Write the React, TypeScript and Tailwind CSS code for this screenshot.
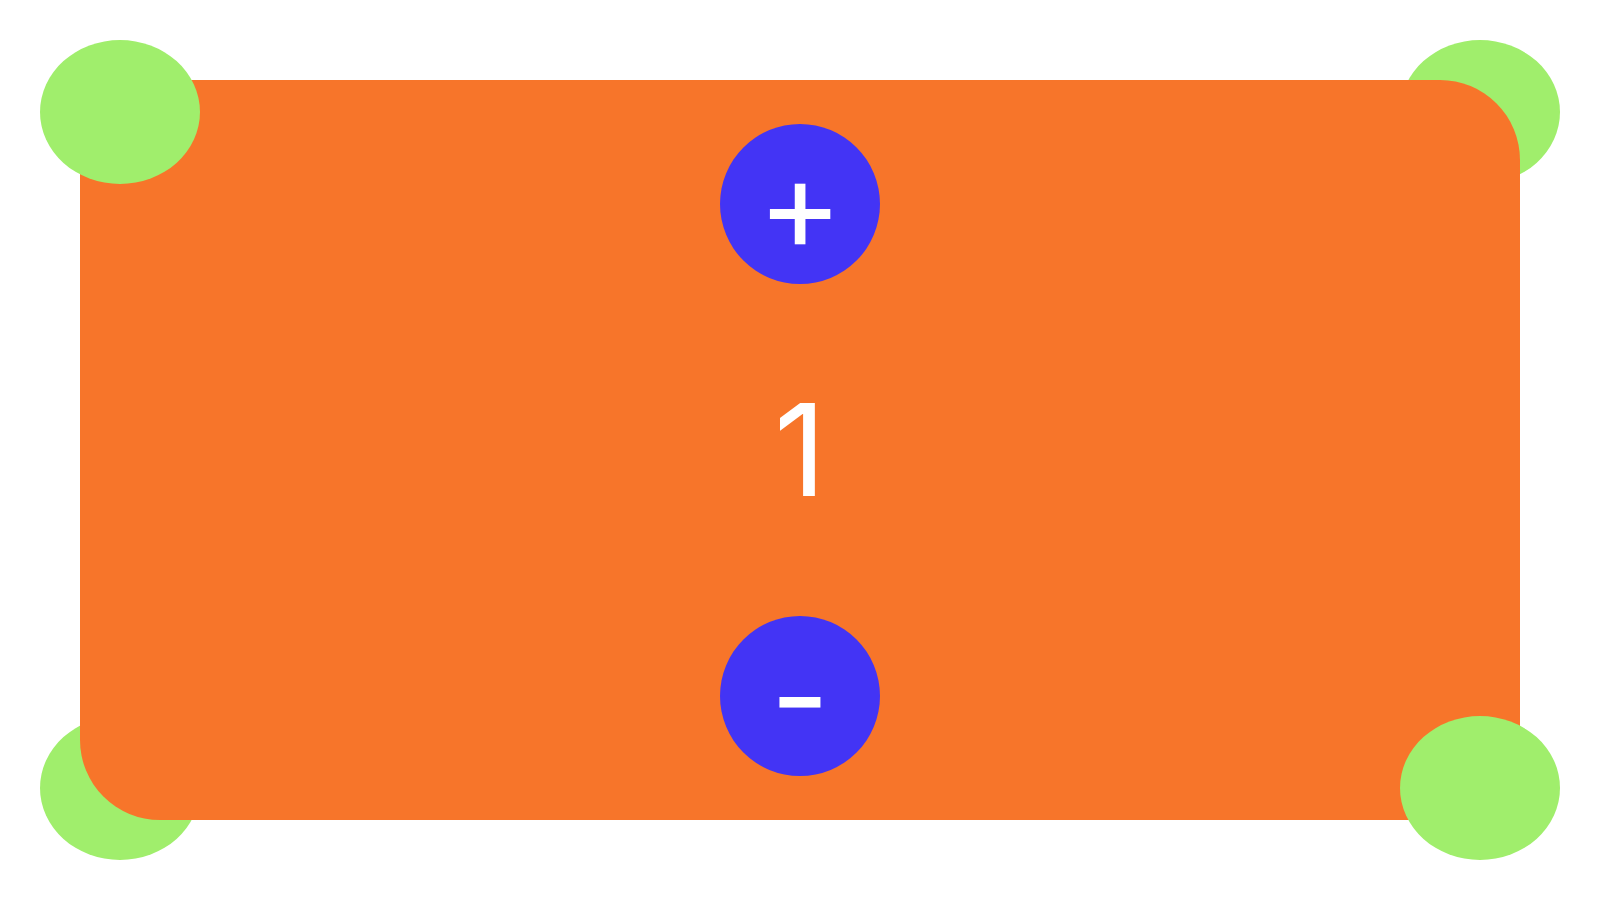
import React, { useState } from "react";

const Blob: React.FC<{ className: string }> = ({ className }) => (
  <div className={`absolute w-[160px] h-[144px] rounded-[50%] bg-[#a0ee6c] ${className}`} />
);

export default function App() {
  const [count, setCount] = useState(1);

  return (
    <div className="w-[1600px] h-[900px] bg-white p-20 font-['Inter',sans-serif]">
      <div className="relative w-full h-full">
        {/* corners tucked under the card */}
        <Blob className="-top-10 -right-10" />
        <Blob className="-bottom-10 -left-10" />

        {/* Card */}
        <div className="relative w-full h-full bg-[#f7752a] rounded-tr-[80px] rounded-bl-[80px] flex flex-col items-center justify-between py-[44px] text-white">
          <button
            onClick={() => setCount((c) => c + 1)}
            className="w-40 h-40 rounded-full bg-[#4334f5] flex items-center justify-center text-9xl leading-none"
          >
            +
          </button>

          <div className="text-9xl leading-none">{count}</div>

          <button
            onClick={() => setCount((c) => c - 1)}
            className="w-40 h-40 rounded-full bg-[#4334f5] flex items-center justify-center text-9xl leading-none"
          >
            -
          </button>
        </div>

        {/* corners sitting on top of the card */}
        <Blob className="-top-10 -left-10" />
        <Blob className="-bottom-10 -right-10" />
      </div>
    </div>
  );
}
